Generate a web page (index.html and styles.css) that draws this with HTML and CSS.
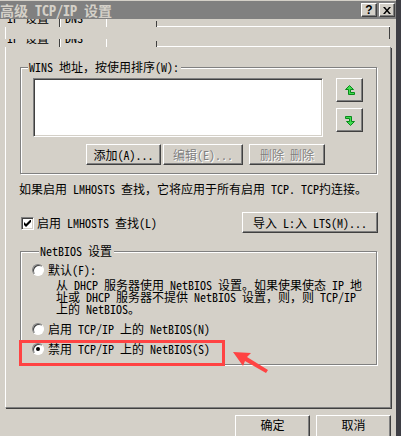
FILE: index.html
```html
<!DOCTYPE html>
<html lang="zh-CN">

<head>
  <meta charset="UTF-8">
  <title>高级 TCP/IP 设置</title>
  <link rel="stylesheet" href="styles.css">
</head>

<body>
  <div class="window">
    <div class="titlebar">
      <span class="title">高级 TCP/IP 设置</span>
      <span class="caption-buttons">
        <span class="cap-btn help">?</span>
        <span class="cap-btn close">
          <svg xmlns="http://www.w3.org/2000/svg" width="8" height="7" viewBox="0 0 8 7">
            <path d="M0 0h2l2 2.5L6 0h2L5 3.5 8 7H6L4 4.5 2 7H0l3-3.5z" fill="#000" />
          </svg>
        </span>
      </span>
    </div>

    <!-- leftover tab strip from a badly refreshed screen -->
    <div class="tab-ghost">
      <div class="ghost-tabs">
        <span class="ghost-tab first"><span class="ghost-text">IP 设置</span></span>
        <span class="ghost-tab"><span class="ghost-text">DNS</span></span>
        <span class="ghost-tick"></span>
        <span class="ghost-line"></span>
      </div>
      <div class="ghost-body"></div>
    </div>
    <div class="tab-ghost last">
      <div class="ghost-tabs">
        <span class="ghost-tab first"><span class="ghost-text">IP 设置</span></span>
        <span class="ghost-tab"><span class="ghost-text">DNS</span></span>
        <span class="ghost-tick"></span>
        <span class="ghost-line"></span>
      </div>
    </div>

    <div class="panel">
      <fieldset class="group wins">
        <legend>WINS 地址，按使用排序(W):</legend>
        <div class="wins-body">
          <div class="listbox"></div>
          <div class="order-buttons">
            <span class="btn icon-btn">
              <svg xmlns="http://www.w3.org/2000/svg" width="10" height="11" viewBox="0 0 10 11">
                <path d="M4.5 0.5L0.5 4.5H3.5V9.5H9.5V7.5H5.5V4.5H8.5Z" fill="#3fdc4f" stroke="#0a8a1a" stroke-width="1" stroke-linejoin="miter" />
              </svg>
            </span>
            <span class="btn icon-btn">
              <svg xmlns="http://www.w3.org/2000/svg" width="10" height="11" viewBox="0 0 10 11">
                <path d="M0.5 1.5H6.5V6.5H9.5L5.5 10.5L1.5 6.5H4.5V3.5H0.5Z" fill="#3fdc4f" stroke="#0a8a1a" stroke-width="1" stroke-linejoin="miter" />
              </svg>
            </span>
          </div>
        </div>
        <div class="wins-actions">
          <span class="btn add">添加(A)...</span>
          <span class="btn edit disabled">编辑(E)...</span>
          <span class="btn remove disabled">删除 删除</span>
        </div>
      </fieldset>

      <p class="note">如果启用 LMHOSTS 查找，它将应用于所有启用 TCP. TCP扚连接。</p>

      <div class="lmhosts-row">
        <span class="check">
          <span class="checkbox">
            <svg xmlns="http://www.w3.org/2000/svg" width="7" height="7" viewBox="0 0 7 7">
              <path d="M0 2v3l2 2 5-5V-1L2 4z" fill="#000" />
            </svg>
          </span>
          <span class="check-label">启用 LMHOSTS 查找(L)</span>
        </span>
        <span class="btn import">导入 L:入 LTS(M)...</span>
      </div>

      <fieldset class="group netbios">
        <legend>NetBIOS 设置</legend>
        <div class="radio-row"><span class="radio"></span>默认(F):</div>
        <p class="desc">从 DHCP 服务器使用 NetBIOS 设置。如果使果使态 IP 地<br>址或 DHCP 服务器不提供 NetBIOS 设置，则，则 TCP/IP<br>上的 NetBIOS。</p>
        <div class="radio-row enable"><span class="radio"></span>启用 TCP/IP 上的 NetBIOS(N)</div>
        <div class="radio-row disable"><span class="radio checked"></span>禁用 TCP/IP 上的 NetBIOS(S)</div>
      </fieldset>
    </div>

    <div class="footer">
      <span class="btn dialog-btn">确定</span>
      <span class="btn dialog-btn">取消</span>
    </div>

    <!-- red annotation drawn over the screenshot -->
    <div class="highlight"></div>
    <svg class="callout-arrow" xmlns="http://www.w3.org/2000/svg" width="401" height="436" viewBox="0 0 401 436">
      <polygon points="233,352 251,353 247,357 268,370 266,373 245,361 243,366" fill="#ff4343" />
    </svg>
  </div>
</body>

</html>
```

FILE: styles.css
```css
body {
  margin: 0;
  background: #d4d0c8;
}

.window {
  position: relative;
  width: 396px;
  height: 436px;
  overflow: hidden;
  background: #d4d0c8;
  border-right: 5px solid #3e3e44;
  font-family: "Noto Sans Mono CJK SC", "Noto Sans CJK SC", sans-serif;
  font-size: 12px;
  line-height: 14px;
  color: #000;
}

.titlebar {
  display: flex;
  align-items: center;
  justify-content: space-between;
  height: 18px;
  margin-top: 1px;
  background: #808080;
}

.titlebar .title {
  color: #d4d0c8;
  font-size: 14px;
  font-weight: bold;
  line-height: 18px;
  white-space: pre;
}

.caption-buttons {
  display: flex;
  gap: 2px;
  padding-right: 1px;
}

.cap-btn {
  display: flex;
  align-items: center;
  justify-content: center;
  box-sizing: border-box;
  width: 16px;
  height: 14px;
  background: #d4d0c8;
  border: 1px solid;
  border-color: #fff #404040 #404040 #fff;
  box-shadow: inset -1px -1px 0 #808080;
  font-family: "Liberation Sans", sans-serif;
  font-size: 12px;
  font-weight: bold;
  line-height: 12px;
}

/* ghost tab strips */
.tab-ghost {
  height: 20px;
}

.tab-ghost.last {
  height: 8px;
}

.ghost-tabs {
  display: flex;
  align-items: flex-end;
  height: 8px;
  padding-left: 5px;
}

.ghost-tab {
  height: 8px;
  overflow: hidden;
  box-sizing: border-box;
  border-right: 1px solid #404040;
  box-shadow: 1px 0 0 #fff;
  font-size: 12px;
  line-height: 12px;
}

.ghost-tab.first {
  width: 55px;
}

.ghost-tab:nth-child(2) {
  width: 47px;
  border-right-color: #fff;
  box-shadow: none;
}

.ghost-text {
  display: block;
  margin-top: -7px;
  padding-left: 5px;
  white-space: pre;
}

.ghost-tab.first .ghost-text {
  padding-left: 2px;
}

.ghost-tick {
  width: 1px;
  height: 6px;
  margin-left: 49px;
  background: #404040;
}

.ghost-line {
  width: 233px;
  height: 1px;
  background: #fff;
}

.ghost-body {
  height: 12px;
  margin-left: 5px;
  width: 385px;
  border-left: 1px solid #fff;
  border-right: 1px solid #404040;
  box-sizing: border-box;
}

/* tab panel */
.panel {
  box-sizing: border-box;
  width: 386px;
  height: 361px;
  margin-left: 5px;
  border-left: 1px solid #fff;
  border-right: 1px solid #808080;
  border-bottom: 1px solid #808080;
  box-shadow: 1px 1px 0 #404040;
  padding-top: 14px;
}

.group {
  box-sizing: border-box;
  width: 357px;
  margin: 0 0 0 14px;
  padding: 0;
  min-inline-size: 0;
  border: 1px solid #808080;
  box-shadow: inset 1px 1px 0 #fff, 1px 1px 0 #fff;
}

.group legend {
  margin-left: 7px;
  padding: 0 2px 0 1px;
  background: #d4d0c8;
  line-height: 12px;
  white-space: pre;
}

.wins-body {
  display: flex;
  align-items: flex-start;
  padding: 5px 0 0 12px;
}

.listbox {
  box-sizing: border-box;
  width: 290px;
  height: 59px;
  background: #fff;
  border: 1px solid;
  border-color: #808080 #fff #fff #808080;
  box-shadow: inset 1px 1px 0 #404040, inset -1px -1px 0 #d4d0c8;
}

.order-buttons {
  display: flex;
  flex-direction: column;
  gap: 6px;
  margin-left: 13px;
}

.btn {
  display: flex;
  align-items: center;
  justify-content: center;
  box-sizing: border-box;
  height: 21px;
  background: #d4d0c8;
  border: 1px solid;
  border-color: #fff #404040 #404040 #fff;
  box-shadow: inset -1px -1px 0 #808080;
  white-space: pre;
}

.btn.disabled {
  color: #808080;
  text-shadow: 1px 1px 0 #fff;
}

.icon-btn {
  width: 27px;
  height: 24px;
}

.icon-btn svg {
  display: block;
}

.wins-actions {
  display: flex;
  padding: 7px 0 8px 65px;
}

.btn.add {
  width: 75px;
}

.btn.edit {
  width: 80px;
  margin-left: 2px;
}

.btn.remove {
  width: 76px;
  margin-left: 6px;
}

.note {
  margin: 8px 0 0 13px;
  white-space: pre;
}

.lmhosts-row {
  display: flex;
  align-items: center;
  justify-content: space-between;
  width: 357px;
  margin: 16px 0 0 15px;
}

.check {
  display: flex;
  align-items: center;
  gap: 3px;
}

.check-label {
  white-space: pre;
}

.checkbox {
  display: flex;
  align-items: center;
  justify-content: center;
  box-sizing: border-box;
  width: 13px;
  height: 13px;
  margin-top: 1px;
  background: #fff;
  border: 1px solid;
  border-color: #808080 #fff #fff #808080;
  box-shadow: inset 1px 1px 0 #404040, inset -1px -1px 0 #d4d0c8;
}

.btn.import {
  width: 136px;
}

.group.netbios {
  margin-top: 12px;
  padding: 6px 0 8px 11px;
}

.radio-row {
  display: flex;
  align-items: center;
  gap: 4px;
  height: 14px;
  white-space: pre;
}

.radio {
  display: flex;
  align-items: center;
  justify-content: center;
  box-sizing: border-box;
  width: 12px;
  height: 12px;
  border-radius: 50%;
  background: #fff;
  border: 1px solid;
  border-color: #808080 #fff #fff #808080;
  box-shadow: inset 1px 1px 0 #404040;
}

.radio.checked::after {
  content: "";
  width: 4px;
  height: 4px;
  border-radius: 50%;
  background: #000;
}

.desc {
  margin: 2px 0 0 24px;
  line-height: 12px;
  white-space: pre;
}

.radio-row.enable {
  margin-top: 7px;
}

.radio-row.disable {
  margin-top: 6px;
}

.footer {
  display: flex;
  justify-content: flex-end;
  gap: 6px;
  padding: 7px 5px 0 0;
}

.dialog-btn {
  width: 75px;
  height: 23px;
  align-items: flex-start;
  padding-top: 2px;
}

.highlight {
  position: absolute;
  left: 19px;
  top: 340px;
  width: 206px;
  height: 26px;
  box-sizing: border-box;
  border: 3px solid #ff4343;
}

.callout-arrow {
  position: absolute;
  left: 0;
  top: 0;
}
```
